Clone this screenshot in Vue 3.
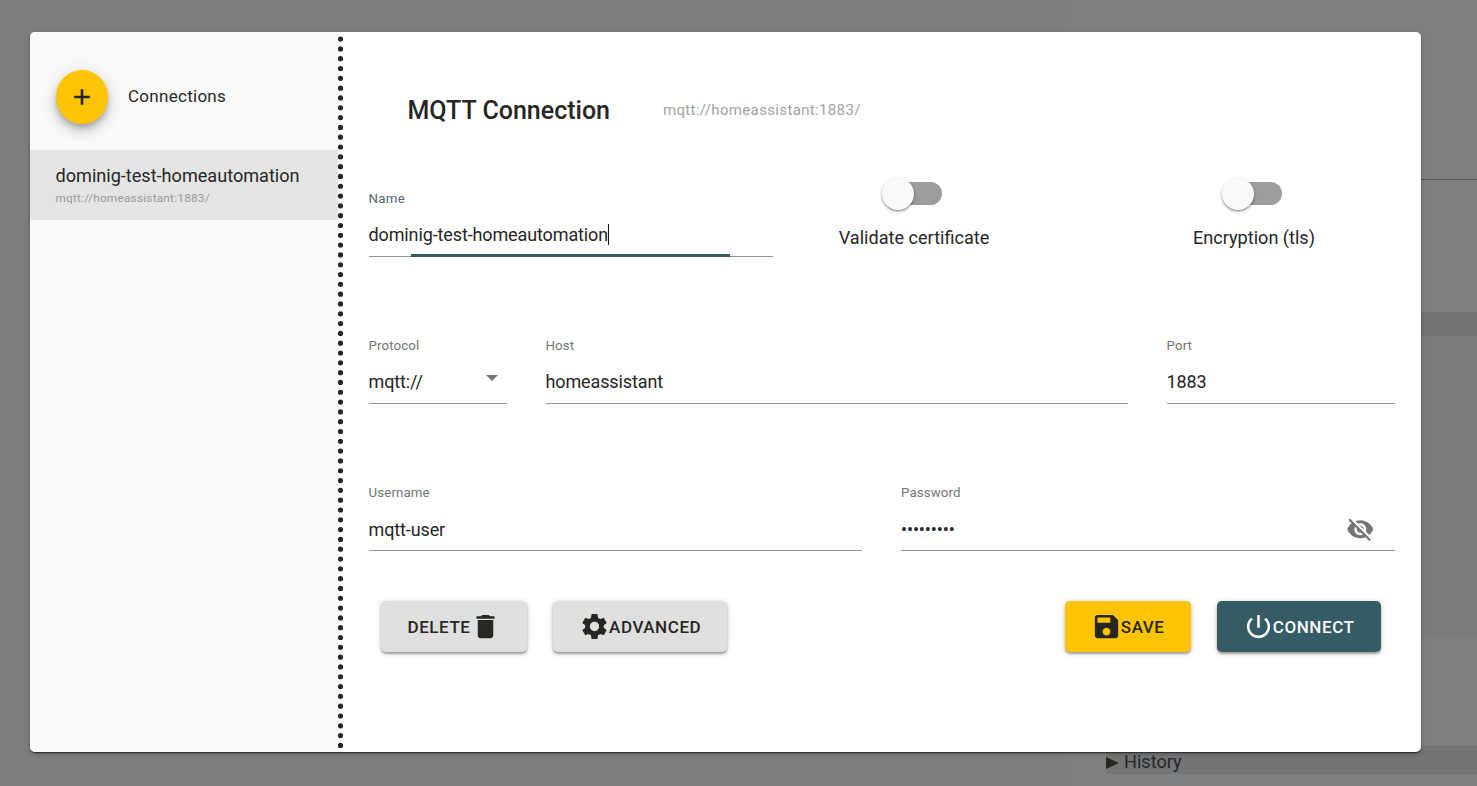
<script setup>
const connection = {
  name: 'dominig-test-homeautomation',
  url: 'mqtt://homeassistant:1883/',
  host: 'homeassistant',
  port: '1883',
  username: 'mqtt-user',
  password: '•••••••••',
}
const switches = ['Validate certificate', 'Encryption (tls)']
</script>

<template>
  <div class="screen">
    <div class="behind">
      <div class="behind-rule"></div>
      <div class="behind-band"></div>
      <div class="behind-panel"></div>
      <div class="history">
        <svg class="caret" viewBox="0 0 14 14"><path d="M0 0.5 14 7 0 13.5z" /></svg>
        <span class="history-text">History</span>
      </div>
    </div>

    <div class="dialog">
      <aside class="sidebar">
        <div class="side-head">
          <button class="fab">
            <svg viewBox="0 0 24 24"><path d="M19 13h-6v6h-2v-6H5v-2h6V5h2v6h6v2z" /></svg>
          </button>
          <span class="side-title">Connections</span>
        </div>
        <div class="side-item">
          <span class="item-name">{{ connection.name }}</span>
          <span class="item-url">{{ connection.url }}</span>
        </div>
      </aside>
      <svg class="divider" width="5" height="720" viewBox="0 0 5 720">
        <path d="M2.5 7.1V715" />
      </svg>

      <main class="content">
        <header class="head">
          <h1 class="title">MQTT Connection</h1>
          <span class="subtitle">{{ connection.url }}</span>
        </header>

        <div class="row row-name">
          <div class="field name focused">
            <label>Name</label>
            <div class="value"><span class="txt">{{ connection.name }}</span><i class="cursor"></i></div>
          </div>
          <div v-for="s in switches" :key="s" class="toggle">
            <div class="switch"><span class="knob"></span></div>
            <span class="toggle-text">{{ s }}</span>
          </div>
        </div>

        <div class="row row-host">
          <div class="field protocol">
            <label>Protocol</label>
            <div class="value">
              <span class="txt">mqtt://</span>
              <svg class="arrow" viewBox="0 0 12 6"><path d="M0 0h12L6 6z" /></svg>
            </div>
          </div>
          <div class="field host">
            <label>Host</label>
            <div class="value"><span class="txt">{{ connection.host }}</span></div>
          </div>
          <div class="field port">
            <label>Port</label>
            <div class="value"><span class="txt">{{ connection.port }}</span></div>
          </div>
        </div>

        <div class="row row-user">
          <div class="field user">
            <label>Username</label>
            <div class="value"><span class="txt">{{ connection.username }}</span></div>
          </div>
          <div class="field pass">
            <label>Password</label>
            <div class="value">
              <span class="txt">{{ connection.password }}</span>
              <svg class="eye" viewBox="0 0 24 24"><path d="M12 7c2.76 0 5 2.24 5 5 0 .65-.13 1.26-.36 1.83l2.92 2.92c1.51-1.26 2.7-2.89 3.43-4.75-1.73-4.39-6-7.5-11-7.5-1.4 0-2.74.25-3.98.7l2.16 2.16C10.74 7.13 11.35 7 12 7zM2 4.27l2.28 2.28.46.46C3.08 8.3 1.78 10.02 1 12c1.73 4.39 6 7.5 11 7.5 1.55 0 3.03-.3 4.38-.84l.42.42L19.73 22 21 20.73 3.27 3 2 4.27zM7.53 9.8l1.55 1.55c-.05.21-.08.43-.08.65 0 1.66 1.34 3 3 3 .22 0 .44-.03.65-.08l1.55 1.55c-.67.33-1.41.53-2.2.53-2.76 0-5-2.24-5-5 0-.79.2-1.53.53-2.2zm4.31-.78l3.15 3.15.02-.16c0-1.66-1.34-3-3-3l-.17.01z" /></svg>
            </div>
          </div>
        </div>

        <footer class="actions">
          <button class="btn delete">
            <span>DELETE</span>
            <svg viewBox="0 0 24 24"><path d="M6 19c0 1.1.9 2 2 2h8c1.1 0 2-.9 2-2V7H6v12zM19 4h-3.5l-1-1h-5l-1 1H5v2h14V4z" /></svg>
          </button>
          <button class="btn advanced">
            <svg viewBox="0 0 24 24"><path d="M19.14 12.94c.04-.3.06-.61.06-.94 0-.32-.02-.64-.07-.94l2.03-1.58c.18-.14.23-.41.12-.61l-1.92-3.32c-.12-.22-.37-.29-.59-.22l-2.39.96c-.5-.38-1.03-.7-1.62-.94l-.36-2.54c-.04-.24-.24-.41-.48-.41h-3.84c-.24 0-.43.17-.47.41l-.36 2.54c-.59.24-1.13.57-1.62.94l-2.39-.96c-.22-.08-.47 0-.59.22L2.74 8.87c-.12.21-.08.47.12.61l2.03 1.58c-.05.3-.09.63-.09.94s.02.64.07.94l-2.03 1.58c-.18.14-.23.41-.12.61l1.92 3.32c.12.22.37.29.59.22l2.39-.96c.5.38 1.03.7 1.62.94l.36 2.54c.05.24.24.41.48.41h3.84c.24 0 .44-.17.47-.41l.36-2.54c.59-.24 1.13-.56 1.62-.94l2.39.96c.22.08.47 0 .59-.22l1.92-3.32c.12-.22.07-.47-.12-.61l-2.01-1.58zM12 15.6c-1.98 0-3.6-1.62-3.6-3.6s1.62-3.6 3.6-3.6 3.6 1.62 3.6 3.6-1.62 3.6-3.6 3.6z" /></svg>
            <span>ADVANCED</span>
          </button>
          <button class="btn save">
            <svg viewBox="0 0 24 24"><path d="M17 3H5c-1.11 0-2 .9-2 2v14c0 1.1.89 2 2 2h14c1.1 0 2-.9 2-2V7l-4-4zm-5 16c-1.66 0-3-1.34-3-3s1.34-3 3-3 3 1.34 3 3-1.34 3-3 3zm3-10H5V5h10v4z" /></svg>
            <span>SAVE</span>
          </button>
          <button class="btn connect">
            <svg viewBox="0 0 24 24"><path d="M13 3h-2v10h2V3zm4.83 2.17l-1.42 1.42C17.99 7.86 19 9.81 19 12c0 3.87-3.13 7-7 7s-7-3.13-7-7c0-2.19 1.01-4.14 2.58-5.42L6.17 5.17C4.23 6.82 3 9.26 3 12c0 4.97 4.03 9 9 9s9-4.03 9-9c0-2.74-1.23-5.18-3.17-6.83z" /></svg>
            <span>CONNECT</span>
          </button>
        </footer>
      </main>
    </div>
  </div>
</template>

<style>
body {
  margin: 0;
  overflow: hidden;
}
</style>

<style scoped>
* {
  box-sizing: border-box;
}
.screen {
  position: relative;
  width: 1477px;
  height: 786px;
  padding: 31.5px 0 0 29.5px;
  overflow: hidden;
  background: #7d7d7d;
  color: #262626;
  font-family: Roboto, sans-serif;
  font-size: 18.1px;
}
.behind {
  position: absolute;
  inset: 0 0 0 1066px;
  background: #7f7f7f;
}
.behind-rule {
  position: absolute;
  inset: 179px 0 auto 0;
  height: 1px;
  background: #505252;
}
.behind-band {
  position: absolute;
  inset: 312px 0 auto 0;
  height: 24px;
  background: #727475;
}
.behind-panel {
  position: absolute;
  inset: 336px 0 auto 0;
  height: 302px;
  background: #7b7b7b;
}
.history {
  position: absolute;
  inset: 746px 0 auto 40px;
  height: 28px;
  display: flex;
  align-items: center;
  gap: 5px;
  padding-top: 3px;
  background: #727475;
}
.caret {
  width: 13px;
  height: 14px;
  margin-top: 2px;
  fill: #262622;
}
.dialog {
  position: relative;
  display: flex;
  width: 1391px;
  height: 720px;
  background: #fff;
  border-radius: 5px;
  box-shadow: 0 1px 1px rgba(0, 0, 0, 0.55), 0 2px 4px rgba(0, 0, 0, 0.25);
}
.sidebar {
  width: 308px;
  background: #fafafa;
  border-radius: 5px 0 0 5px;
}
.divider {
  flex: none;
  fill: none;
  stroke: #262626;
  stroke-width: 5.2;
  stroke-linecap: round;
  stroke-dasharray: 0 9.81;
  overflow: visible;
}
.side-head {
  display: flex;
  align-items: center;
  height: 118px;
  padding: 13px 0 0 26px;
}
.fab {
  display: flex;
  align-items: center;
  justify-content: center;
  width: 52.5px;
  height: 53.5px;
  padding: 0;
  border: 0;
  border-radius: 50%;
  background: #ffc404;
  box-shadow: 0 4px 6px -1px rgba(0, 0, 0, 0.25), 0 8px 13px rgba(0, 0, 0, 0.14), 0 1px 22px rgba(0, 0, 0, 0.09);
}
.fab svg {
  width: 26px;
  height: 26px;
  fill: #262626;
  stroke: #262626;
  stroke-width: 0.4;
}
.side-title {
  margin-left: 20px;
  margin-top: -3px;
  font-size: 17px;
  letter-spacing: 0.28px;
}
.side-item {
  display: flex;
  flex-direction: column;
  height: 70.5px;
  padding: 15px 0 0 26px;
  background: #e5e5e5;
}
.item-name {
  line-height: 22px;
}
.item-url {
  line-height: 16px;
  margin-top: 3px;
  font-size: 11.8px;
  letter-spacing: 0.23px;
  color: #999;
}
.content {
  flex: 1;
  padding: 0 26px;
}
.head {
  display: flex;
  align-items: center;
  gap: 53px;
  height: 118px;
  padding: 39px 0 0 39px;
}
.title {
  margin: 0;
  font-size: 25px;
  font-weight: 500;
}
.subtitle {
  font-size: 15px;
  letter-spacing: 0.35px;
  color: #a3a3a3;
}
.row {
  display: flex;
  height: 147px;
  padding-top: 37px;
  gap: 39px;
}
.row-name {
  gap: 0;
}
.field {
  height: 70.5px;
  border-bottom: 1px solid #949494;
}
.field label {
  display: block;
  height: 24px;
  line-height: 24px;
  font-size: 13.3px;
  letter-spacing: 0.12px;
  color: #757575;
}
.value {
  display: flex;
  align-items: center;
  height: 46px;
  padding-top: 1.5px;
}
.row-user .value {
  padding-top: 4px;
}
.txt {
  font-size: 18px;
  letter-spacing: -0.12px;
}
.name {
  position: relative;
  width: 404px;
}
.focused label {
  letter-spacing: 0.3px;
  color: #53676d;
}
.focused::after {
  content: '';
  position: absolute;
  left: 42px;
  bottom: -0.5px;
  width: 319.5px;
  height: 2.6px;
  background: #355c65;
}
.cursor {
  width: 1.5px;
  height: 21px;
  margin-left: -0.5px;
  background: #111;
}
.toggle {
  display: flex;
  flex-direction: column;
  align-items: center;
  width: 222px;
  margin-left: 30px;
}
.toggle + .toggle {
  margin-left: 118px;
}
.switch {
  position: relative;
  width: 47px;
  height: 23px;
  margin: -5px 0 0 10px;
  border-radius: 12px;
  background: #9c9e9d;
}
.knob {
  position: absolute;
  left: -13.5px;
  top: -4px;
  width: 32px;
  height: 32px;
  border-radius: 50%;
  background: #fafafa;
  box-shadow: 0 1.5px 2px rgba(0, 0, 0, 0.35), 0 1px 4px rgba(0, 0, 0, 0.14);
}
.toggle-text {
  margin-top: 21px;
  margin-left: 1px;
  line-height: 24px;
  white-space: nowrap;
}
.protocol {
  width: 138px;
}
.arrow {
  width: 12px;
  height: 6px;
  margin: -7px 8.5px 0 auto;
  fill: #757575;
}
.host {
  width: 582px;
}
.port {
  width: 228px;
}
.user,
.pass {
  width: 493.5px;
}
.eye {
  width: 28.5px;
  height: 28.5px;
  margin: 0 20px 0 auto;
  fill: #757575;
}
.actions {
  display: flex;
  gap: 26px;
  padding: 10.5px 13.5px 0 12.5px;
}
.btn {
  display: flex;
  align-items: center;
  justify-content: center;
  flex: none;
  height: 51px;
  padding: 0 1px 0 0;
  border: 0;
  border-radius: 5px;
  background: #e0e0e0;
  color: #262622;
  font-family: inherit;
  font-size: 17px;
  font-weight: 500;
  letter-spacing: 0.55px;
  box-shadow: 0 2px 2px rgba(0, 0, 0, 0.3), 0 1px 6px rgba(0, 0, 0, 0.18);
}
.btn svg {
  width: 31px;
  height: 31px;
  fill: currentColor;
}
.btn svg + span {
  margin-left: -0.7px;
}
.delete {
  width: 146px;
  padding: 0 0 0 1px;
}
.advanced {
  width: 174px;
  padding: 0;
}
.save {
  width: 126px;
  margin-left: auto;
  background: #ffc404;
}
.connect {
  width: 164px;
  background: #355c65;
  color: #fafafa;
}
</style>
